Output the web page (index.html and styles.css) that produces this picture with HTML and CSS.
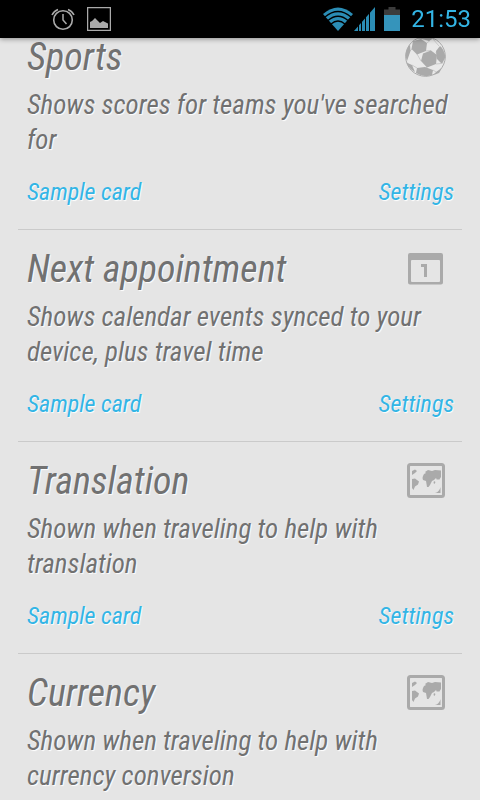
FILE: index.html
```html
<!DOCTYPE html>
<html lang="en">
<head>
<meta charset="utf-8">
<meta name="viewport" content="width=device-width, initial-scale=1">
<title>Cards</title>
<link rel="stylesheet" href="styles.css">
</head>
<body>
<header class="status">
  <div class="notices">
    <svg width="24" height="24" viewBox="0 0 24 24" fill="none" stroke="#aaa" stroke-width="1.6" aria-hidden="true">
      <circle cx="12" cy="13" r="9.3"/>
      <path d="M12 7v6l3.5 4" stroke-width="1.5"/>
      <path d="M1 8Q3 4 7 2.500M17 2.500Q21 4 23 8"/>
    </svg>
    <svg width="24" height="24" viewBox="0 0 24 24" aria-hidden="true">
      <rect x=".6" y=".6" width="22.800" height="22.800" fill="none" stroke="#aaa" stroke-width="1.300"/>
      <path d="M3 21v-6l2-1 3-3 5 5 3-2 5 2.500V21z" fill="#aaa"/>
    </svg>
  </div>
  <div class="system">
    <svg width="32" height="24" viewBox="0 0 32 24" aria-hidden="true">
      <path d="M1 7Q16-6 31 7L16 24z" fill="#2b8db5"/>
      <path d="M3 10Q16-1 29 10M6 13.500Q16 5 26 13.500M9 17Q16 11 23 17" fill="none" stroke="#000" stroke-width="1.300"/>
    </svg>
    <svg width="22" height="24" viewBox="0 0 22 24" aria-hidden="true">
      <path d="M0 24L21 0v24z" fill="#2b8db5"/>
      <path d="M4.500 16v8M7.500 13v11M11.500 9v15M15.500 4v20" stroke="#000" stroke-width="1"/>
    </svg>
    <svg class="battery" width="16" height="24" viewBox="0 0 16 24" aria-hidden="true">
      <path d="M0 2.500h4.500V0h7v2.500H16V9H0z" fill="#3c3c3c"/>
      <path d="M0 8h16v16H0z" fill="#3594bb"/>
    </svg>
    <time class="clock">21:53</time>
  </div>
</header>

<svg class="symbols" aria-hidden="true">
  <symbol id="map" viewBox="0 0 38 36">
    <rect x="1.500" y="1.500" width="35" height="32" rx="2" fill="none" stroke="#aaa" stroke-width="3"/>
    <path fill="#aaa" d="M5 8l3-1.500L10 8l-2 2-3 2zM5 16l3-.5 4 3-1 3-3 2-1.500 3.500L5 25zM16 13l1-2 2-1-1-1 3-2 4 1 3-1 6 .5V14l-2 3-1-1-1 1-1-2-2 2-2 1-2 4-1.500 2h-1.500L19 18l-3-1-.5-2zM27 18l1.500 1-1 2-1-1zM28 30c2 0 5-3 5.500-6v6z"/>
  </symbol>
</svg>

<main class="list">
  <section class="card">
    <div class="heading">
      <h2>Sports</h2>
      <svg class="icon" viewBox="0 0 42 42" aria-hidden="true">
        <circle cx="20.500" cy="20.500" r="19.800" fill="#e9e9e9" stroke="#aaa" stroke-width="1"/>
        <g fill="#aaa">
          <path d="M8 5l8-2 6 4-1 8-9 3.500L6.500 13z"/>
          <path d="M18 17.500l8-3 6 4.500-1 9-9 3.500-6-6.500z"/>
          <path d="M12 2.500Q20-1 28 2.500L24 5l-7-2z"/>
          <path d="M31 15l4-5q4 3 5.500 11L37 28l-5-5z"/>
          <path d="M.5 20Q1 13 5 8.500L5.500 15 2 25zM1.500 26.500L7 29l3 7Q4 33 1.500 26.500z"/>
          <path d="M12 32l8-1 8 3-1 5Q19 42 11 37z"/>
          <path d="M31 36l6-4-3 5-5 2z"/>
        </g>
        <path d="M22 7l3-2.500M12 18l4 7M21 15l5-.5M32 19l-1-3M22 31l-1 1M31 28l5-.5M28 34l3 2M7 13l-2 2M7 29l5 3M28 3l6 7" stroke="#aaa" stroke-width=".5" fill="none"/>
      </svg>
    </div>
    <p>Shows scores for teams you've searched for</p>
    <div class="actions"><a href="#sample">Sample card</a><a href="#settings">Settings</a></div>
  </section>

  <section class="card">
    <div class="heading">
      <h2>Next appointment</h2>
      <svg class="icon" viewBox="0 0 42 42" aria-hidden="true">
        <path fill="#aaa" fill-rule="evenodd" d="M5 5h31q2 0 2 2v27.500q0 2-2 2H5q-2 0-2-2V7q0-2 2-2zM7 12q-1 0-1 1v20q0 1 1 1h27q1 0 1-1V13q0-1-1-1z"/>
        <path fill="#aaa" d="M16 16h6v13h-3V19h-3z"/>
      </svg>
    </div>
    <p>Shows calendar events synced to your device, plus travel time</p>
    <div class="actions"><a href="#sample">Sample card</a><a href="#settings">Settings</a></div>
  </section>

  <section class="card">
    <div class="heading">
      <h2>Translation</h2>
      <svg class="icon" viewBox="-2 -3 42 42" aria-hidden="true"><use href="#map" width="38" height="36"/></svg>
    </div>
    <p>Shown when traveling to help with translation</p>
    <div class="actions"><a href="#sample">Sample card</a><a href="#settings">Settings</a></div>
  </section>

  <section class="card">
    <div class="heading">
      <h2>Currency</h2>
      <svg class="icon" viewBox="-2 -3 42 42" aria-hidden="true"><use href="#map" width="38" height="36"/></svg>
    </div>
    <p>Shown when traveling to help with currency conversion</p>
  </section>
</main>
</body>
</html>
```
FILE: styles.css
```css
* { box-sizing: border-box; }

body {
  margin: 0;
  background: #e5e5e5;
  color: #717171;
  font-family: "Roboto Condensed", Roboto, sans-serif;
}

.status {
  position: fixed;
  top: 0;
  left: 0;
  right: 0;
  z-index: 1;
  height: 38px;
  padding: 0 9px 0 51px;
  display: flex;
  align-items: center;
  justify-content: space-between;
  background: #000;
  box-shadow: 0 1px 5px rgba(0, 0, 0, 0.4);
}

.notices { display: flex; gap: 12px; }

.system { display: flex; align-items: center; }

.battery { margin: 0 11px 0 8px; }

.clock {
  color: #33b5e5;
  font-family: Roboto, sans-serif;
  font-size: 24px;
  line-height: 38px;
}

.symbols { display: none; }

.list { padding: 18px 18px 0; }

.card {
  padding: 16px 8px 19px 9px;
  border-bottom: 1px solid #cacaca;
  font-style: italic;
  text-shadow: 1px 1px 1px #fff;
}

.card:last-child {
  padding-bottom: 0;
  border-bottom: 0;
}

.heading {
  display: flex;
  align-items: center;
  justify-content: space-between;
  padding-right: 7px;
}

h2 {
  margin: 0;
  font-size: 38px;
  font-weight: 400;
  line-height: 46px;
}

.icon { width: 42px; height: 42px; }

p {
  margin: 8px 0 0;
  font-size: 27px;
  line-height: 35px;
}

.actions {
  display: flex;
  justify-content: space-between;
  margin-top: 16px;
  font-size: 24px;
  line-height: 36px;
}

.actions a { color: #33b5e5; text-decoration: none; }
```
